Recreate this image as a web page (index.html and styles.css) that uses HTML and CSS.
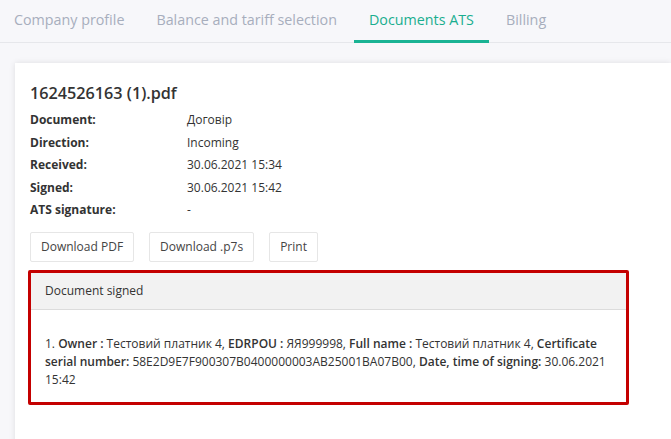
FILE: index.html
```html
<!DOCTYPE html>
<html>
<head>
<meta charset="utf-8">
<link rel="stylesheet" href="styles.css">
</head>
<body>
<nav class="tabs">
  <a class="tab">Company profile</a>
  <a class="tab">Balance and tariff selection</a>
  <a class="tab active">Documents ATS</a>
  <a class="tab">Billing</a>
</nav>
<main class="content">
  <section class="card">
    <h1 class="title">1624526163 (1).pdf</h1>
    <dl class="info">
      <div class="row"><dt>Document:</dt><dd>Договір</dd></div>
      <div class="row"><dt>Direction:</dt><dd>Incoming</dd></div>
      <div class="row"><dt>Received:</dt><dd>30.06.2021 15:34</dd></div>
      <div class="row"><dt>Signed:</dt><dd>30.06.2021 15:42</dd></div>
      <div class="row"><dt>ATS signature:</dt><dd>-</dd></div>
    </dl>
    <div class="actions">
      <button class="btn">Download PDF</button>
      <button class="btn">Download .p7s</button>
      <button class="btn">Print</button>
    </div>
    <div class="panel">
      <div class="panel-head">Document signed</div>
      <div class="panel-body">
        <p>1. <b>Owner :</b> Тестовий платник 4, <b>EDRPOU :</b> ЯЯ999998, <b>Full name :</b> Тестовий платник 4, <b>Certificate serial number:</b> 58E2D9E7F900307B0400000003AB25001BA07B00, <b>Date, time of signing:</b> 30.06.2021 15:42</p>
      </div>
    </div>
  </section>
</main>
</body>
</html>
```

FILE: styles.css
```css
* { box-sizing: border-box; }
html, body { margin: 0; padding: 0; }
body {
  background: #f7f7fa;
  font-family: "Open Sans", "Noto Sans", sans-serif;
  color: #333;
  overflow: hidden;
  height: 439px;
}
.tabs {
  display: flex;
  height: 43px;
  border-bottom: 1px solid #e6e7eb;
}
.tab {
  display: flex;
  align-items: center;
  padding: 0 15px 2px;
  font-size: 14.3px;
  color: #a7aebd;
  border-bottom: 2px solid transparent;
  margin-bottom: -1px;
  margin-right: 2px;
  white-space: nowrap;
}
.tab:first-child { padding-left: 14px; }
.tab.active {
  color: #1aae8f;
  border-bottom: 3px solid #1ab394;
}
.content {
  padding: 20px 0 0 15px;
}
.card {
  background: #fff;
  box-shadow: 0 0 6px rgba(0,0,0,0.10);
  padding: 18px 15px 40px;
  min-height: 400px;
}
.title {
  margin: 0;
  font-size: 16.2px;
  line-height: 24px;
  font-weight: 600;
  color: #333;
}
.info { margin: 4px 0 0; }
.row {
  display: flex;
  font-size: 12px;
  line-height: 22.5px;
}
.row dt {
  width: 157px;
  font-weight: 700;
}
.row dd { margin: 0; color: #333; }
.actions {
  display: flex;
  gap: 15px;
  margin-top: 10px;
}
.btn {
  height: 30px;
  padding: 0 10px;
  background: #fff;
  border: 1px solid #e6e6e6;
  border-radius: 2px;
  font-family: inherit;
  font-size: 12px;
  color: #444;
}
.panel {
  margin: 8px 27px 0 -2px;
  border: 3px solid #c40000;
  border-radius: 2px;
}
.panel-head {
  background: #f2f2f2;
  border-bottom: 1px solid #dcdcdc;
  height: 37px;
  padding: 0 14px;
  display: flex;
  align-items: center;
  font-size: 12px;
}
.panel-body {
  padding: 25px 14px 13px;
  font-size: 12px;
  line-height: 18px;
}
.panel-body p { margin: 0; }
.panel-body b { font-weight: 600; }
```
